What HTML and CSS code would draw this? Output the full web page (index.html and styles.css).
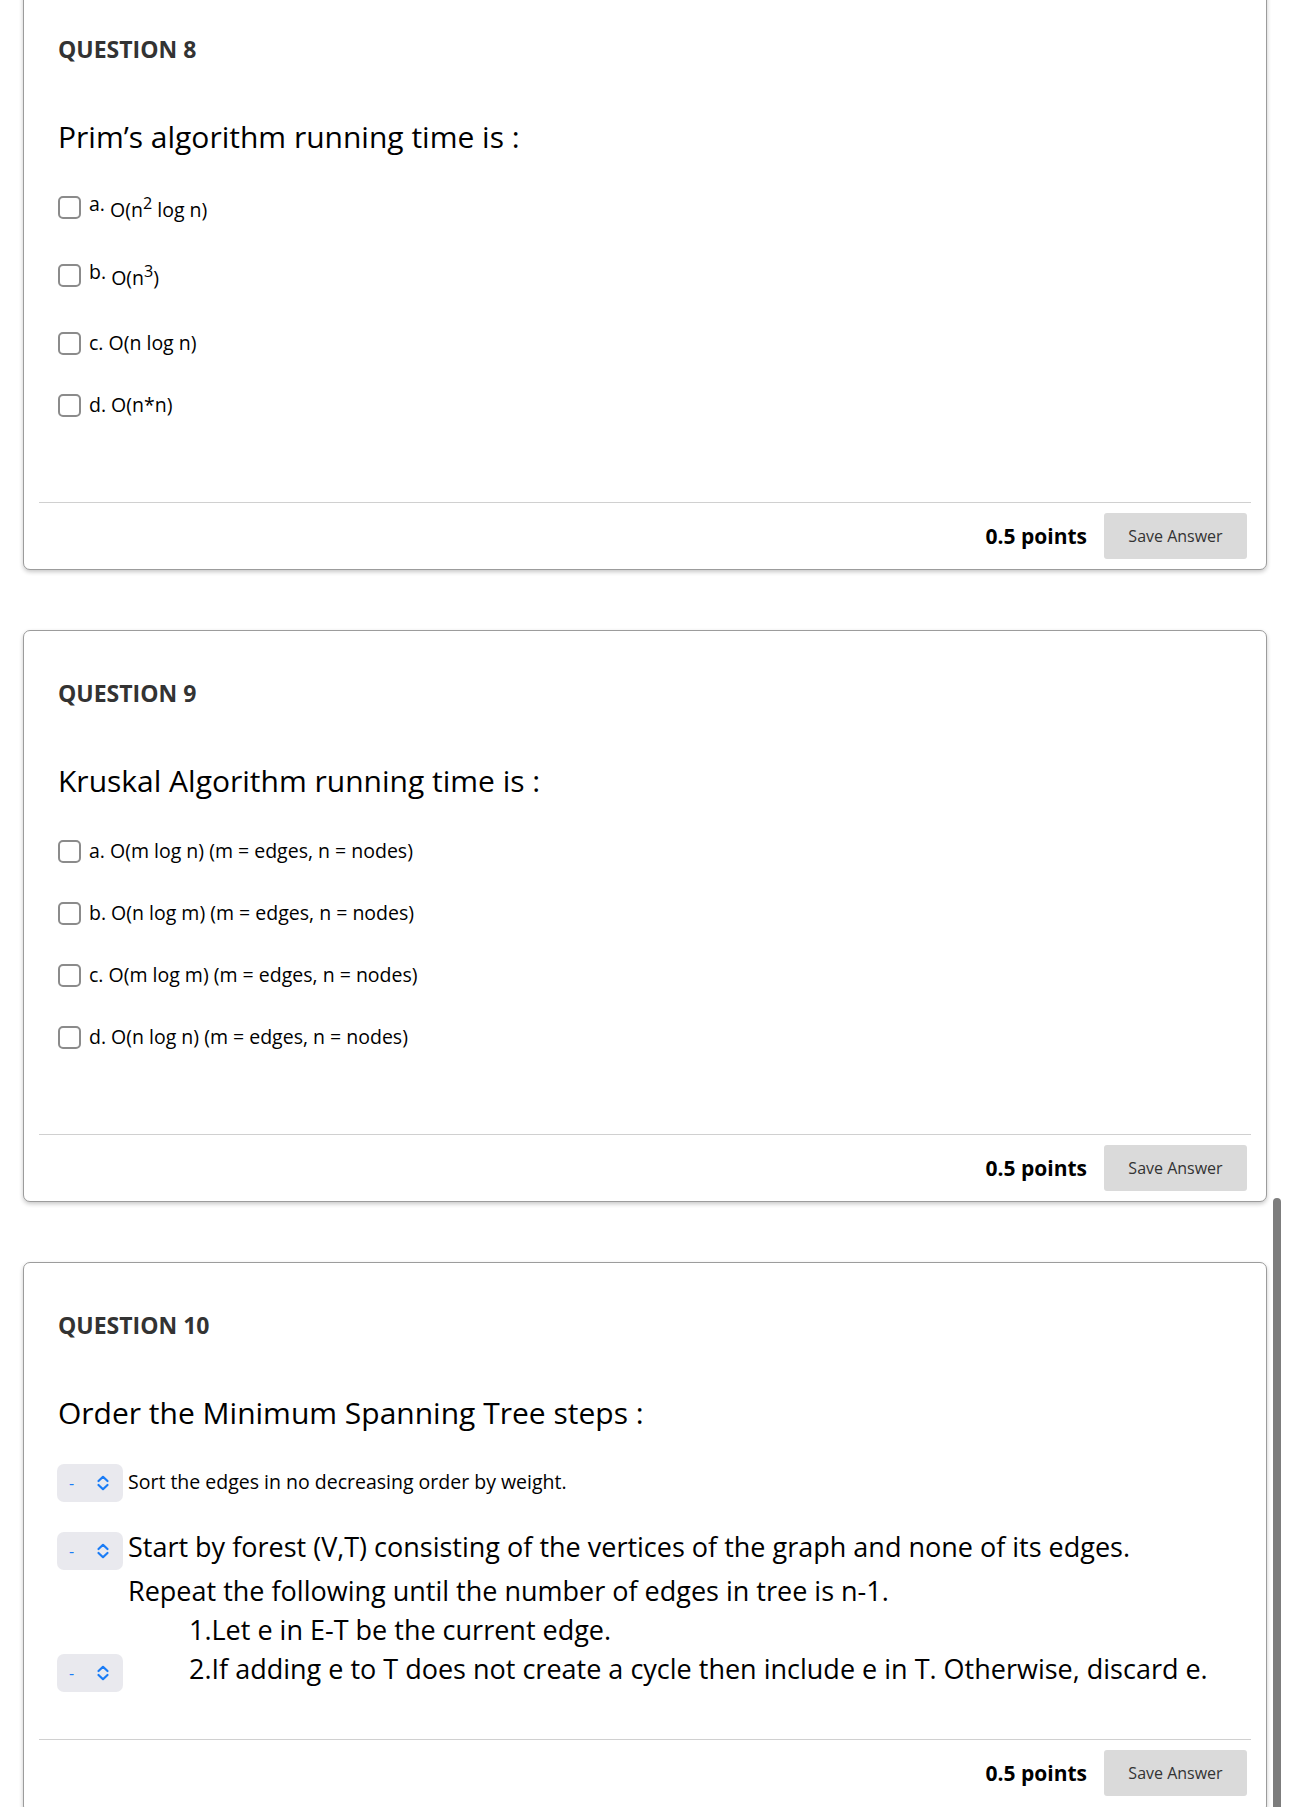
FILE: index.html
```html
<!DOCTYPE html>
<html lang="en">
<head>
<meta charset="utf-8">
<title>Test</title>
<link rel="stylesheet" href="styles.css">
</head>
<body>
<div class="page">

  <section class="card">
    <div class="card-body">
      <h2 class="q-title">QUESTION 8</h2>
      <p class="q-text">Prim’s algorithm running time is :</p>
      <ul class="options">
        <li class="option option-sup"><span class="cb"></span><span class="opt-label">a. <span class="ans">O(n<sup>2</sup> log n)</span></span></li>
        <li class="option option-sup"><span class="cb"></span><span class="opt-label">b. <span class="ans">O(n<sup>3</sup>)</span></span></li>
        <li class="option"><span class="cb"></span><span class="opt-label">c. O(n log n)</span></li>
        <li class="option"><span class="cb"></span><span class="opt-label">d. O(n*n)</span></li>
      </ul>
    </div>
    <div class="card-foot">
      <span class="points">0.5 points</span>
      <button class="save" type="button">Save Answer</button>
    </div>
  </section>

  <section class="card">
    <div class="card-body">
      <h2 class="q-title">QUESTION 9</h2>
      <p class="q-text">Kruskal Algorithm running time is :</p>
      <ul class="options">
        <li class="option"><span class="cb"></span><span class="opt-label">a. O(m log n) (m = edges, n = nodes)</span></li>
        <li class="option"><span class="cb"></span><span class="opt-label">b. O(n log m) (m = edges, n = nodes)</span></li>
        <li class="option"><span class="cb"></span><span class="opt-label">c. O(m log m) (m = edges, n = nodes)</span></li>
        <li class="option"><span class="cb"></span><span class="opt-label">d. O(n log n) (m = edges, n = nodes)</span></li>
      </ul>
    </div>
    <div class="card-foot">
      <span class="points">0.5 points</span>
      <button class="save" type="button">Save Answer</button>
    </div>
  </section>

  <section class="card">
    <div class="card-body card-body-order">
      <h2 class="q-title">QUESTION 10</h2>
      <p class="q-text">Order the Minimum Spanning Tree steps :</p>
      <div class="order">
        <div class="order-row order-row-first">
          <span class="sel"><span class="sel-val">-</span><svg class="chev" viewBox="0 0 14 16" width="14" height="16"><path d="M2.5 6 L7 1.8 L11.5 6 M2.5 10 L7 14.2 L11.5 10" fill="none" stroke="#1a7cf6" stroke-width="2.2" stroke-linecap="round" stroke-linejoin="round"/></svg></span><span class="order-label small">Sort the edges in no decreasing order by weight.</span>
        </div>
        <div class="order-row order-row-second">
          <span class="sel"><span class="sel-val">-</span><svg class="chev" viewBox="0 0 14 16" width="14" height="16"><path d="M2.5 6 L7 1.8 L11.5 6 M2.5 10 L7 14.2 L11.5 10" fill="none" stroke="#1a7cf6" stroke-width="2.2" stroke-linecap="round" stroke-linejoin="round"/></svg></span><span class="order-label big">Start by forest (V,T) consisting of the vertices of the graph and none of its edges.</span>
        </div>
        <div class="order-row">
          <span class="sel"><span class="sel-val">-</span><svg class="chev" viewBox="0 0 14 16" width="14" height="16"><path d="M2.5 6 L7 1.8 L11.5 6 M2.5 10 L7 14.2 L11.5 10" fill="none" stroke="#1a7cf6" stroke-width="2.2" stroke-linecap="round" stroke-linejoin="round"/></svg></span><span class="order-label big block"><span class="line">Repeat the following until the number of edges in tree is n-1.</span><span class="line indent">1.Let e in E-T be the current edge.</span><span class="line indent">2.If adding e to T does not create a cycle then include e in T. Otherwise, discard e.</span></span>
        </div>
      </div>
    </div>
    <div class="card-foot card-foot-last">
      <span class="points">0.5 points</span>
      <button class="save" type="button">Save Answer</button>
    </div>
  </section>

</div>
<div class="scrollbar"></div>
</body>
</html>
```

FILE: styles.css
```css
html, body {
  margin: 0;
  padding: 0;
  background: #ffffff;
}

body {
  font-family: "Open Sans", "Noto Sans", sans-serif;
  color: #000;
  overflow: hidden;
}

.page {
  margin-top: -14px;
  padding: 0 23px 40px 23px;
  display: flex;
  flex-direction: column;
  gap: 60px;
}

.card {
  background: #fff;
  border: 1px solid #9c9c9c;
  border-radius: 7px;
  box-shadow: 0 2px 4px rgba(0, 0, 0, 0.22);
  padding: 0 15px;
}

.card-body {
  padding: 46px 0 66px 19px;
}

.card-body-order {
  padding-bottom: 47px;
}

.q-title {
  margin: 0;
  font-size: 23px;
  line-height: 32px;
  font-weight: 700;
  color: #333;
}

.q-text {
  margin: 52px 0 0;
  font-size: 30px;
  line-height: 40px;
  font-weight: 400;
  color: #000;
}

.options {
  list-style: none;
  margin: 19px 0 0;
  padding: 0;
}

.option {
  display: flex;
  align-items: flex-start;
  padding: 17px 0;
  font-size: 19.5px;
  line-height: 28px;
}

.option-sup {
  padding-bottom: 20px;
}

.option-sup .opt-label {
  line-height: 22px;
}

.cb {
  flex: none;
  width: 19px;
  height: 19px;
  border: 2px solid #8b8b8b;
  border-radius: 5px;
  margin: 2.5px 8px 0 0;
  background: #fff;
}

.opt-label {
  white-space: nowrap;
}

.ans {
  line-height: 28px;
  vertical-align: -6px;
}

.ans sup {
  font-size: 0.83em;
  line-height: 0;
  vertical-align: 8px;
}

.order {
  margin-top: 31px;
}

.order-row {
  white-space: nowrap;
}

.order-row-first {
  margin-bottom: 25px;
}

.order-row-second {
  margin-bottom: 1px;
}

.sel {
  display: inline-flex;
  align-items: center;
  width: 66px;
  height: 38px;
  box-sizing: border-box;
  padding: 0 0 0 12px;
  margin-left: -1px;
  margin-right: 5px;
  background: #e9e9ee;
  border-radius: 7px;
  color: #1a7cf6;
  font-size: 16px;
  line-height: 38px;
  vertical-align: baseline;
}

.sel-val {
  width: 27px;
}

.chev {
  display: block;
}

.order-label {
  display: inline-block;
  vertical-align: baseline;
  color: #000;
}

.order-label.small {
  font-size: 19.5px;
  line-height: 28px;
}

.order-label.big {
  font-size: 27px;
  line-height: 39px;
}

.order-label.block .line {
  display: block;
}

.order-label .indent {
  padding-left: 61px;
}

.card-foot {
  border-top: 1px solid #d0d0d0;
  display: flex;
  justify-content: flex-end;
  align-items: center;
  gap: 17px;
  padding: 10px 4px 10px 0;
}

.card-foot-last {
  padding-bottom: 16px;
}

.points {
  font-size: 21px;
  font-weight: 700;
  color: #000;
}

.save {
  font-family: "Open Sans", "Noto Sans", sans-serif;
  font-size: 16px;
  color: #333;
  background: #dadada;
  border: none;
  border-radius: 3px;
  height: 46px;
  width: 143px;
  padding: 0;
}

.scrollbar {
  position: fixed;
  right: 9px;
  top: 1198px;
  bottom: -10px;
  width: 8px;
  background: #7d7d7d;
  border-radius: 4px;
}
```
